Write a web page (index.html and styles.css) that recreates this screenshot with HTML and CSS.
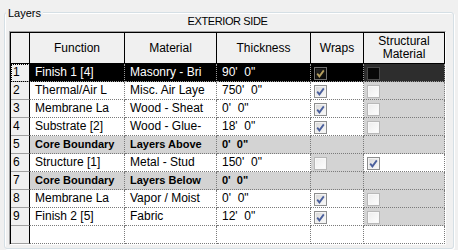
FILE: index.html
```html
<!DOCTYPE html>
<html lang="en">
<head>
  <meta charset="UTF-8" />
  <title>Layers</title>
  <link rel="stylesheet" href="styles.css">
</head>
<body>
  <div class="group">
    <span class="group-title">Layers</span>
    <div class="side">EXTERIOR SIDE</div>
    <div class="frame">
      <div class="grid">
        <div class="hd corner"></div>
        <div class="hd">Function</div>
        <div class="hd">Material</div>
        <div class="hd">Thickness</div>
        <div class="hd">Wraps</div>
        <div class="hd">Structural<br>Material</div>

        <div class="num focus">1</div>
        <div class="c sel">Finish 1 [4]</div>
        <div class="c sel">Masonry - Bri</div>
        <div class="c sel">90'  0"</div>
        <div class="c sel"><span class="cb on dark"><svg viewBox="0 0 11 11"><path d="M2.2 5.6 L4.4 8.4 L8.8 2.4"/></svg></span></div>
        <div class="c sel-dim"><span class="cb dark-off"></span></div>

        <div class="num">2</div>
        <div class="c">Thermal/Air L</div>
        <div class="c">Misc. Air Laye</div>
        <div class="c">750'  0"</div>
        <div class="c"><span class="cb on"><svg viewBox="0 0 11 11"><path d="M2.2 5.6 L4.4 8.4 L8.8 2.4"/></svg></span></div>
        <div class="c off"><span class="cb dis"></span></div>

        <div class="num">3</div>
        <div class="c">Membrane La</div>
        <div class="c">Wood - Sheat</div>
        <div class="c">0'  0"</div>
        <div class="c"><span class="cb on"><svg viewBox="0 0 11 11"><path d="M2.2 5.6 L4.4 8.4 L8.8 2.4"/></svg></span></div>
        <div class="c off"><span class="cb dis"></span></div>

        <div class="num">4</div>
        <div class="c">Substrate [2]</div>
        <div class="c">Wood - Glue-</div>
        <div class="c">18'  0"</div>
        <div class="c"><span class="cb on"><svg viewBox="0 0 11 11"><path d="M2.2 5.6 L4.4 8.4 L8.8 2.4"/></svg></span></div>
        <div class="c off"><span class="cb dis"></span></div>

        <div class="num">5</div>
        <div class="c off bold">Core Boundary</div>
        <div class="c off bold">Layers Above</div>
        <div class="c off bold">0'  0"</div>
        <div class="c off"></div>
        <div class="c off"></div>

        <div class="num">6</div>
        <div class="c">Structure [1]</div>
        <div class="c">Metal - Stud</div>
        <div class="c">150'  0"</div>
        <div class="c off"><span class="cb dis"></span></div>
        <div class="c"><span class="cb on"><svg viewBox="0 0 11 11"><path d="M2.2 5.6 L4.4 8.4 L8.8 2.4"/></svg></span></div>

        <div class="num">7</div>
        <div class="c off bold">Core Boundary</div>
        <div class="c off bold">Layers Below</div>
        <div class="c off bold">0'  0"</div>
        <div class="c off"></div>
        <div class="c off"></div>

        <div class="num">8</div>
        <div class="c">Membrane La</div>
        <div class="c">Vapor / Moist</div>
        <div class="c">0'  0"</div>
        <div class="c"><span class="cb on"><svg viewBox="0 0 11 11"><path d="M2.2 5.6 L4.4 8.4 L8.8 2.4"/></svg></span></div>
        <div class="c off"><span class="cb dis"></span></div>

        <div class="num">9</div>
        <div class="c">Finish 2 [5]</div>
        <div class="c">Fabric</div>
        <div class="c">12'  0"</div>
        <div class="c"><span class="cb on"><svg viewBox="0 0 11 11"><path d="M2.2 5.6 L4.4 8.4 L8.8 2.4"/></svg></span></div>
        <div class="c off"><span class="cb dis"></span></div>

        <div class="num"></div>
        <div class="c"></div>
        <div class="c"></div>
        <div class="c"></div>
        <div class="c"></div>
        <div class="c"></div>
      </div>
    </div>
  </div>
</body>
</html>
```

FILE: styles.css
```css
html, body {
  margin: 0;
  padding: 0;
}

body {
  width: 458px;
  height: 250px;
  background-color: #f0f0f0;
  font-family: "Liberation Sans", Arial, sans-serif;
  font-size: 12px;
  color: #000;
  overflow: hidden;
}

.group {
  position: relative;
  margin: 12px 4px 0 4px;
  border: 1px solid #d5dfe5;
  border-radius: 3px;
  box-shadow: inset 1px 1px 0 #fff, 1px 1px 0 #fff;
  padding: 0 7px 3px 4px;
}

.group-title {
  position: absolute;
  top: -7px;
  left: 1px;
  padding: 0 2px;
  font-size: 11px;
  line-height: 14px;
  background-color: #f0f0f0;
}

.side {
  padding-top: 1px;
  line-height: 14px;
  font-size: 11px;
  letter-spacing: -0.4px;
  text-align: center;
  margin-bottom: 3px;
}

.frame {
  border: 1px solid;
  border-color: #a0a0a0 #fff #fff #a0a0a0;
  width: 435px;
}

.grid {
  display: grid;
  grid-template-columns: 19px 95px 92px 94px 53px 81px;
  grid-template-rows: 31px;
  grid-auto-rows: 18px;
  border-left: 1px solid #000;
  border-top: 1px solid #000;
  background-color: #fff;
}

.grid > div {
  box-sizing: border-box;
  white-space: pre;
  overflow: hidden;
}

.hd {
  background-color: #f0f0f0;
  border-right: 1px solid #000;
  border-bottom: 1px solid #000;
  display: flex;
  align-items: center;
  justify-content: center;
  text-align: center;
  line-height: 13px;
}

.hd:last-child {
  border-right: none;
}

.num {
  background-color: #f0f0f0;
  border-right: 1px solid #000;
  border-bottom: 1px solid #a0a0a0;
  padding-left: 2px;
  line-height: 17px;
}

.num.focus {
  outline: 1px dotted #000;
  outline-offset: -1px;
}

.c {
  border-right: 1px dotted #7a7a7a;
  border-bottom: 1px dotted #7a7a7a;
  padding-left: 5px;
  line-height: 17px;
  display: flex;
  align-items: center;
}

.c.off {
  background-color: #d3d3d3;
}

.c.bold {
  font-weight: bold;
  font-size: 11px;
}

.c.sel {
  background-color: #000;
  color: #fff;
  border-color: #9a9a9a;
}

.c.sel-dim {
  background-color: #2d2d2d;
  border-color: #9a9a9a;
}

.cb {
  box-sizing: border-box;
  width: 13px;
  height: 13px;
  margin-left: -2px;
  margin-top: 1px;
  border: 1px solid #8e8f8f;
  background: linear-gradient(135deg, #d8d8d8, #fcfcfc);
  box-shadow: inset 0 0 0 1px #f4f4f4;
}

.cb svg {
  display: block;
  width: 11px;
  height: 11px;
}

.cb path {
  fill: none;
  stroke: #4a5f9c;
  stroke-width: 1.8;
}

.cb.dis {
  border-color: #b8b8b8;
  background: linear-gradient(135deg, #ececec, #fefefe);
  box-shadow: inset 0 0 0 1px #f8f8f8;
}

.cb.dark {
  border-color: #707070;
  background: linear-gradient(135deg, #272727, #030303);
  box-shadow: inset 0 0 0 1px #0b0b0b;
}

.cb.dark path {
  stroke: #b59f5e;
}

.cb.dark-off {
  border-color: #4a4a4a;
  background: #080808;
  box-shadow: none;
}
```
